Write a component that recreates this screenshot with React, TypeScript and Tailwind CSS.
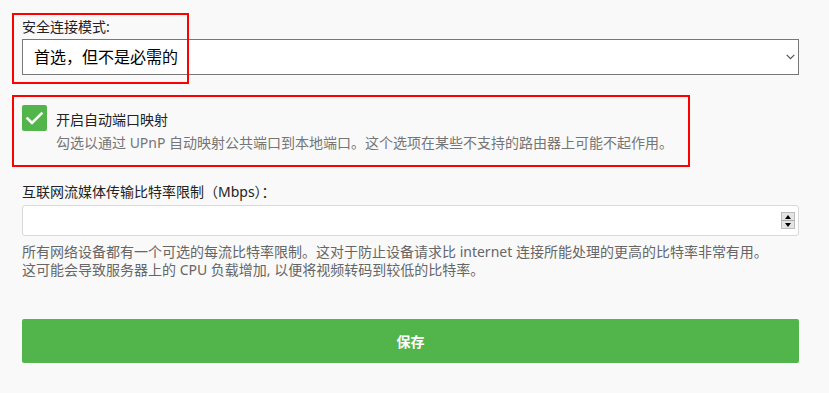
import { useState } from "react";

const font = "font-['Noto_Sans','Noto_Sans_CJK_SC',sans-serif]";

function Chevron() {
  return (
    <svg width="9" height="6" viewBox="0 0 9 6" className="text-[#555]">
      <path d="M0.7 0.8 L4.5 4.6 L8.3 0.8" fill="none" stroke="currentColor" strokeWidth="1.2" />
    </svg>
  );
}

function Spinner() {
  return (
    <div className="flex flex-col w-[14px] h-[17px] border border-[#bbb] bg-[#e4e4e4]">
      <div className="flex-1 flex items-center justify-center border-b border-[#aaa]">
        <div className="w-0 h-0 border-l-[3px] border-r-[3px] border-b-[4px] border-l-transparent border-r-transparent border-b-black" />
      </div>
      <div className="flex-1 flex items-center justify-center">
        <div className="w-0 h-0 border-l-[3px] border-r-[3px] border-t-[4px] border-l-transparent border-r-transparent border-t-black" />
      </div>
    </div>
  );
}

export default function App() {
  const [mode, setMode] = useState("preferred");
  const [upnp, setUpnp] = useState(true);
  const [bitrate, setBitrate] = useState("");

  return (
    <div className={`relative w-[829px] h-[393px] bg-[#f9f9f9] overflow-hidden ${font}`}>
      <div className="pl-[22px] pr-[30px] pt-[17px]">
        {/* Secure connection mode */}
        <label className="block text-[14px] leading-[20px] text-[#222] mb-[2px]">安全连接模式:</label>
        <div className="relative">
          <select
            value={mode}
            onChange={(e) => setMode(e.target.value)}
            className="appearance-none block w-full h-[36px] bg-white border border-[#777] pl-[11px] text-[16px] text-black outline-none"
          >
            <option value="preferred">首选，但不是必需的</option>
            <option value="required">必需的</option>
            <option value="disabled">禁用</option>
          </select>
          <div className="pointer-events-none absolute right-[4px] top-[15px]">
            <Chevron />
          </div>
        </div>

        {/* UPnP */}
        <div className="mt-[30px]">
          <div className="flex items-start gap-[9px]">
            <button
              type="button"
              onClick={() => setUpnp(!upnp)}
              className={`w-[25px] h-[26px] rounded-[2px] flex items-center justify-center ${upnp ? "bg-[#52b54b]" : "bg-white border-2 border-[#777]"}`}
            >
              {upnp && (
                <svg width="25" height="26" viewBox="0 0 25 26">
                  <path d="M5.5 13.5 L10 18 L19.5 8.5" fill="none" stroke="white" strokeWidth="2.6" strokeLinecap="square" />
                </svg>
              )}
            </button>
            <span className="mt-[5px] text-[14px] leading-[20px] text-[#222]">开启自动端口映射</span>
          </div>
          <p className="ml-[34px] mt-[2px] text-[14px] leading-[20px] text-[#757575]">
            勾选以通过 UPnP 自动映射公共端口到本地端口。这个选项在某些不支持的路由器上可能不起作用。
          </p>
        </div>

        {/* Bitrate limit */}
        <label className="block mt-[29px] text-[14px] leading-[20px] text-[#222]">
          互联网流媒体传输比特率限制（Mbps）：
        </label>
        <div className="mt-[3px] h-[31px] flex items-center bg-white border border-[#d9d9d9] rounded-[3px] pr-[3px]">
          <input
            value={bitrate}
            onChange={(e) => setBitrate(e.target.value)}
            className="flex-1 h-full px-[8px] bg-transparent outline-none text-[14px]"
          />
          <Spinner />
        </div>
        <p className="mt-[7px] text-[14px] leading-[18px] text-[#666]">
          所有网络设备都有一个可选的每流比特率限制。这对于防止设备请求比 internet 连接所能处理的更高的比特率非常有用。
          <br />
          这可能会导致服务器上的 CPU 负载增加, 以便将视频转码到较低的比特率。
        </p>

        <button
          type="button"
          className="mt-[40px] w-full h-[44px] bg-[#52b54b] rounded-[2px] text-white text-[14px] font-bold"
        >
          保存
        </button>
      </div>

      {/* annotation boxes */}
      <div className="pointer-events-none absolute left-[12px] top-[13px] w-[177px] h-[71px] border-2 border-[#ff0000]" />
      <div className="pointer-events-none absolute left-[12px] top-[95px] w-[678px] h-[72px] border-2 border-[#ff0000]" />
    </div>
  );
}
